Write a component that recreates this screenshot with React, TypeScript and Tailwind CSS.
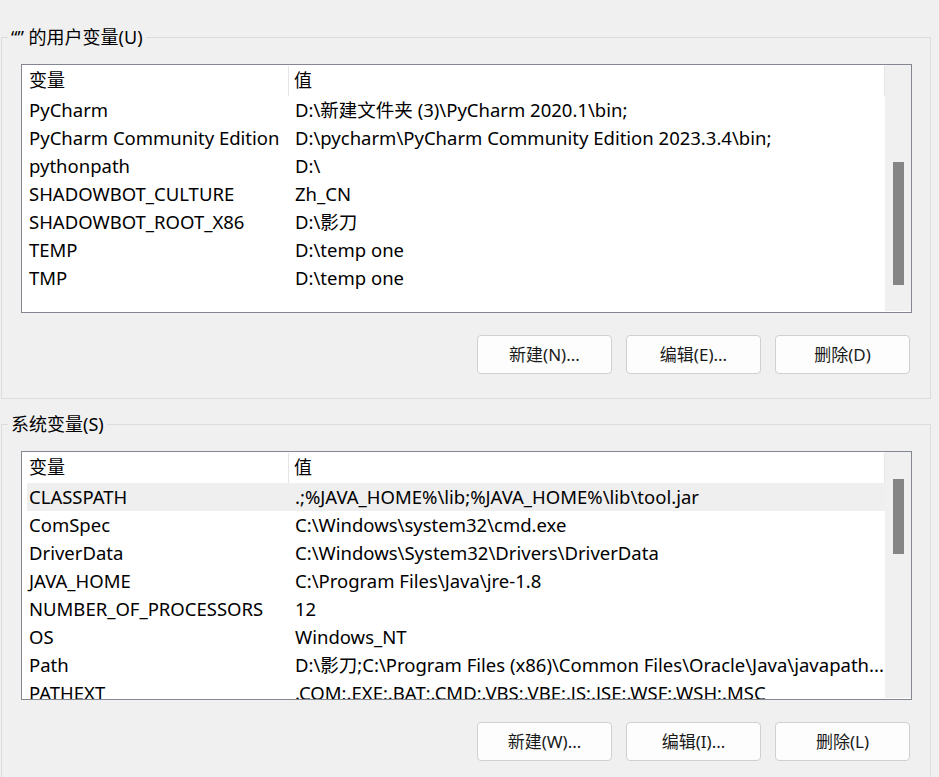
import React from "react";

type Row = { name: string; value: string; selected?: boolean };

const userVars: Row[] = [
	{ name: "PyCharm", value: "D:\\新建文件夹 (3)\\PyCharm 2020.1\\bin;" },
	{
		name: "PyCharm Community Edition",
		value: "D:\\pycharm\\PyCharm Community Edition 2023.3.4\\bin;",
	},
	{ name: "pythonpath", value: "D:\\" },
	{ name: "SHADOWBOT_CULTURE", value: "Zh_CN" },
	{ name: "SHADOWBOT_ROOT_X86", value: "D:\\影刀" },
	{ name: "TEMP", value: "D:\\temp one" },
	{ name: "TMP", value: "D:\\temp one" },
];

const systemVars: Row[] = [
	{
		name: "CLASSPATH",
		value: ".;%JAVA_HOME%\\lib;%JAVA_HOME%\\lib\\tool.jar",
		selected: true,
	},
	{ name: "ComSpec", value: "C:\\Windows\\system32\\cmd.exe" },
	{ name: "DriverData", value: "C:\\Windows\\System32\\Drivers\\DriverData" },
	{ name: "JAVA_HOME", value: "C:\\Program Files\\Java\\jre-1.8" },
	{ name: "NUMBER_OF_PROCESSORS", value: "12" },
	{ name: "OS", value: "Windows_NT" },
	{
		name: "Path",
		value: "D:\\影刀;C:\\Program Files (x86)\\Common Files\\Oracle\\Java\\javapath...",
	},
	{
		name: "PATHEXT",
		value: ".COM;.EXE;.BAT;.CMD;.VBS;.VBE;.JS;.JSE;.WSF;.WSH;.MSC",
	},
];

const VarList = ({
	rows,
	thumbTop,
	thumbHeight,
}: {
	rows: Row[];
	thumbTop: string;
	thumbHeight: string;
}) => {
	return (
		<div className="w-[891px] h-[249px] border border-[#828790] bg-white flex overflow-hidden">
			<div className="flex-1 flex flex-col overflow-hidden">
				{/* header */}
				<div className="h-[31px] shrink-0 flex items-stretch">
					<div className="w-[266px] pl-[7px] flex items-center">变量</div>
					<div className="w-px mt-px bg-[#e5e5e5]" />
					<div className="flex-1 pl-[5px] flex items-center">值</div>
					<div className="w-px mt-px bg-[#e5e5e5]" />
				</div>
				{rows.map((row) => (
					<div
						key={row.name}
						className={
							"h-[28px] shrink-0 ml-[5px] flex items-center whitespace-nowrap text-[18.5px] " +
							(row.selected ? "bg-[#efefef]" : "")
						}
					>
						<div className="w-[261px] pl-[2px] overflow-hidden">{row.name}</div>
						<div className="flex-1 pl-[7px] overflow-hidden">{row.value}</div>
					</div>
				))}
			</div>
			{/* scrollbar */}
			<div className="w-[26px] shrink-0 bg-[#f0f0f0] mb-px flex flex-col items-center">
				<div className={thumbTop} />
				<div className={"w-[11px] bg-[#858585] " + thumbHeight} />
			</div>
		</div>
	);
};

const Buttons = ({ labels }: { labels: string[] }) => (
	<div className="mt-[22px] mr-[2px] flex justify-end gap-[14px]">
		{labels.map((l) => (
			<button
				key={l}
				className="w-[135px] h-[39px] rounded-[4px] border border-[#d0d0d0] bg-[#fdfdfd] text-[17px] text-[#1a1a1a] flex items-center justify-center"
			>
				{l}
			</button>
		))}
	</div>
);

export default function App() {
	return (
		<div className="w-[939px] h-[777px] overflow-hidden bg-[#f0f0f0] text-black text-[18px] font-['Noto_Sans','Noto_Sans_CJK_SC',sans-serif]">
			<fieldset className="mt-[25px] ml-px w-[930px] border border-[#dcdcdc] pl-[19px] pr-[18px] pb-[24px]">
				<legend className="-ml-[13px] px-[3px] leading-[24px]">“” 的用户变量(U)</legend>
				<div className="mt-[15px]">
					<VarList rows={userVars} thumbTop="h-[97px]" thumbHeight="h-[123px]" />
				</div>
				<Buttons labels={["新建(N)...", "编辑(E)...", "删除(D)"]} />
			</fieldset>
			<fieldset className="mt-[13px] ml-px w-[930px] border border-[#dcdcdc] border-b-0 pl-[19px] pr-[18px] pb-[24px]">
				<legend className="-ml-[13px] px-[3px] leading-[24px]">系统变量(S)</legend>
				<div className="mt-[15px]">
					<VarList rows={systemVars} thumbTop="h-[27px]" thumbHeight="h-[75px]" />
				</div>
				<Buttons labels={["新建(W)...", "编辑(I)...", "删除(L)"]} />
			</fieldset>
		</div>
	);
}
